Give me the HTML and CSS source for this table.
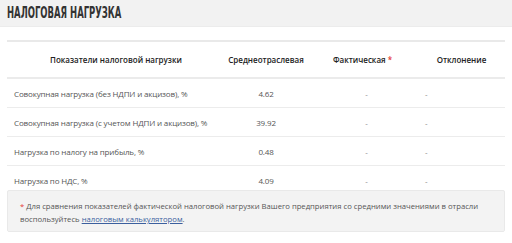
FILE: index.html
```
<!DOCTYPE html>
<html lang="ru">
<head>
<meta charset="utf-8">
<link rel="stylesheet" href="styles.css">
</head>
<body>
<div class="band"><h1 class="title">НАЛОГОВАЯ НАГРУЗКА</h1></div>
<div class="content">
<table class="tax">
<colgroup><col class="c1"><col class="c2"><col class="c3"><col class="c4"></colgroup>
<thead>
<tr><th>Показатели налоговой нагрузки</th><th>Среднеотраслевая</th><th>Фактическая <span class="req">*</span></th><th>Отклонение</th></tr>
</thead>
<tbody>
<tr><td class="name">Совокупная нагрузка (без НДПИ и акцизов), %</td><td class="num">4.62</td><td class="fact">-</td><td class="dev">-</td></tr>
<tr><td class="name">Совокупная нагрузка (с учетом НДПИ и акцизов), %</td><td class="num">39.92</td><td class="fact">-</td><td class="dev">-</td></tr>
<tr><td class="name">Нагрузка по налогу на прибыль, %</td><td class="num">0.48</td><td class="fact">-</td><td class="dev">-</td></tr>
<tr class="last"><td class="name">Нагрузка по НДС, %</td><td class="num">4.09</td><td class="fact">-</td><td class="dev">-</td></tr>
</tbody>
</table>
<div class="note"><span class="req">*</span> Для сравнения показателей фактической налоговой нагрузки Вашего предприятия со средними значениями в отрасли воспользуйтесь <a class="link" href="#">налоговым калькулятором</a>.</div>
</div>
</body>
</html>
```
FILE: styles.css
```
html, body { margin: 0; padding: 0; background: #fff; }
body { font-family: "Open Sans", "Noto Sans", sans-serif; color: #555; }
.band { background: #f2f2f2; height: 27px; border-bottom: 1px solid #ececec; box-sizing: border-box; padding: 1px 7px 0; }
.title { display: inline-block; margin: 0; font-family: "DejaVu Sans", sans-serif; font-weight: bold; font-size: 16px; line-height: 22px; color: #333; transform: scaleX(0.53); transform-origin: left center; white-space: nowrap; }
.content { padding: 13px 7px 0; }
.tax { width: 498px; border-collapse: collapse; table-layout: fixed; font-size: 8px; }
.c1 { width: 218px; } .c2 { width: 82px; } .c3 { width: 111px; } .c4 { width: 87px; }
.tax thead tr { border-top: 2px solid #e9e9e9; border-bottom: 2px solid #ebebeb; }
.tax th { height: 35px; padding: 0; font-weight: 600; color: #222; text-align: center; font-size: 8px; }
.tax td { height: 28px; padding: 0; border-bottom: 1px solid #ececec; letter-spacing: -0.15px; }
.tax tr.last td { border-bottom: none; height: 15px; vertical-align: top; padding-top: 9px; }
.name { padding-left: 7px !important; }
.num { text-align: center; }
.fact { text-align: center; padding-left: 8px !important; color: #888; }
.dev { padding-left: 7px !important; color: #888; }
.req { color: #e53935; }
.note { background: #f3f3f3; border: 1px solid #e9e9e9; border-radius: 2px; padding: 9px 4px 5px 12px; font-size: 7.7px; line-height: 13px; color: #555; }
.link { color: #3b5f9e; text-decoration: underline; }
```
